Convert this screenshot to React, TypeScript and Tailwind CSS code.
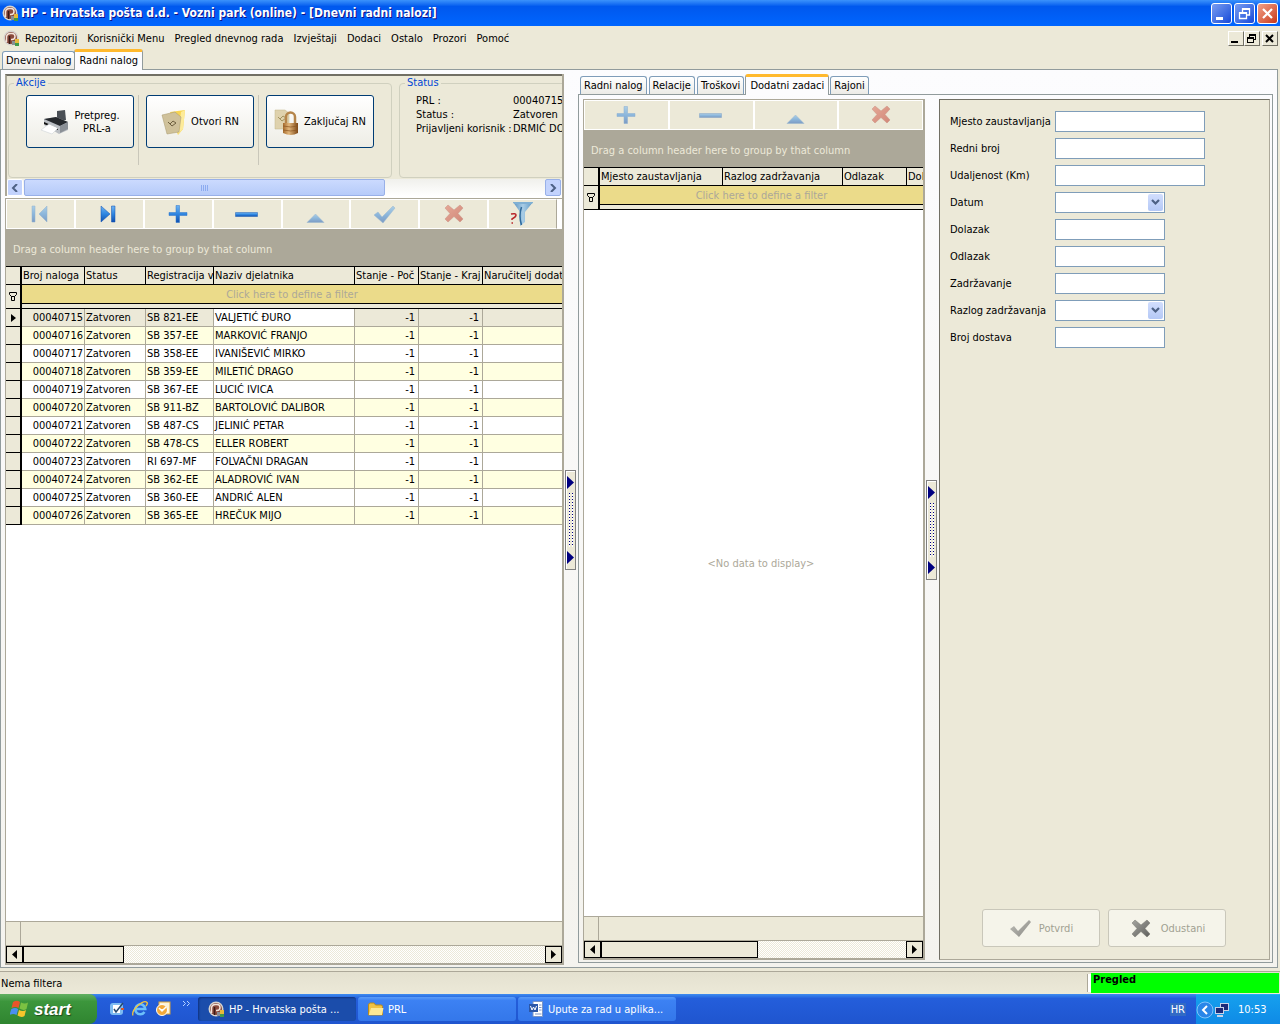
import { useState } from 'react';
import type { ReactNode } from 'react';

const menuItems = ['Repozitorij', 'Korisnički Menu', 'Pregled dnevnog rada', 'Izvještaji', 'Dodaci', 'Ostalo', 'Prozori', 'Pomoć'];

const orders = [
  { id: '00040715', reg: 'SB 821-EE', name: 'VALJETIĆ ĐURO' },
  { id: '00040716', reg: 'SB 357-EE', name: 'MARKOVIĆ FRANJO' },
  { id: '00040717', reg: 'SB 358-EE', name: 'IVANIŠEVIĆ MIRKO' },
  { id: '00040718', reg: 'SB 359-EE', name: 'MILETIĆ DRAGO' },
  { id: '00040719', reg: 'SB 367-EE', name: 'LUCIĆ IVICA' },
  { id: '00040720', reg: 'SB 911-BZ', name: 'BARTOLOVIĆ DALIBOR' },
  { id: '00040721', reg: 'SB 487-CS', name: 'JELINIĆ PETAR' },
  { id: '00040722', reg: 'SB 478-CS', name: 'ELLER ROBERT' },
  { id: '00040723', reg: 'RI 697-MF', name: 'FOLVAČNI DRAGAN' },
  { id: '00040724', reg: 'SB 362-EE', name: 'ALADROVIĆ IVAN' },
  { id: '00040725', reg: 'SB 360-EE', name: 'ANDRIĆ ALEN' },
  { id: '00040726', reg: 'SB 365-EE', name: 'HREČUK MIJO' },
];

const fields = [
  { id: 'mjesto', label: 'Mjesto zaustavljanja', wide: true },
  { id: 'redni', label: 'Redni broj', wide: true },
  { id: 'udaljenost', label: 'Udaljenost (Km)', wide: true },
  { id: 'datum', label: 'Datum', select: true },
  { id: 'dolazak', label: 'Dolazak' },
  { id: 'odlazak', label: 'Odlazak' },
  { id: 'zadrzavanje', label: 'Zadržavanje' },
  { id: 'razlog', label: 'Razlog zadržavanja', select: true },
  { id: 'dostava', label: 'Broj dostava' },
];

const AppIcon = () => (
  <svg width="17" height="17" viewBox="0 0 17 17" className="shrink-0">
    <circle cx="8" cy="8" r="7.500" fill="#d6d3cf" />
    <circle cx="8" cy="8" r="6" fill="#8a4a3c" />
    <path d="M3.500 12V7a4 4 0 0 1 4-3.500h1.500a3 3 0 0 1 0 6H8" fill="none" stroke="#f4e4da" strokeWidth="1.500" />
    <path d="M6.500 6v8" stroke="#3a1a16" strokeWidth="1.500" />
    <rect x="9" y="11" width="4" height="4" fill="#8a8f94" />
    <rect x="12" y="9" width="4" height="4" fill="#e7b93a" />
    <rect x="12" y="13" width="4" height="3" fill="#3f9a4a" />
  </svg>
);

// shared gradients for the toolbar glyphs
const Defs = () => (
  <svg width="0" height="0" className="absolute" aria-hidden="true">
    <defs>
      <linearGradient id="blue" x1="0" y1="0" x2="0" y2="1">
        <stop offset="0" stopColor="#6fb4f2" />
        <stop offset="0.5" stopColor="#2f86e0" />
        <stop offset="1" stopColor="#0f4fb0" />
      </linearGradient>
      <linearGradient id="red" x1="0" y1="0" x2="1" y2="1">
        <stop offset="0" stopColor="#e06a58" />
        <stop offset="1" stopColor="#b8281c" />
      </linearGradient>
      <linearGradient id="gray" x1="0" y1="0" x2="1" y2="1">
        <stop offset="0" stopColor="#a5a5a0" />
        <stop offset="1" stopColor="#5f5f5c" />
      </linearGradient>
      <linearGradient id="bronze" x1="0" y1="0" x2="1" y2="0">
        <stop offset="0" stopColor="#a56a2c" />
        <stop offset="0.4" stopColor="#e2b77c" />
        <stop offset="1" stopColor="#7d4715" />
      </linearGradient>
      <linearGradient id="funnel" x1="0" y1="0" x2="1" y2="0">
        <stop offset="0" stopColor="#5c93c0" />
        <stop offset="0.5" stopColor="#a9cde6" />
        <stop offset="1" stopColor="#5b95c2" />
      </linearGradient>
    </defs>
  </svg>
);

const crossPath = 'M6 4l6 5 6-5 3 3-5 5.500 5 5.500-3 3-6-5.500-6 5.500-3-3 5-5.500-5-5.500z';

const glyphs: Record<string, ReactNode> = {
  first: <path d="M4 5h3v16H4zM19 5v16l-8-8z" fill="url(#blue)" stroke="#3a7cc8" strokeWidth=".5" />,
  last: <path d="M4 5v16l9-8zM14.500 5h3.500v16h-3.500z" fill="url(#blue)" stroke="#0f4fb0" strokeWidth=".5" />,
  add: <path d="M10 4.500h3.500v7H21v3h-7.500v7H10v-7H3v-3h7z" fill="url(#blue)" stroke="#2a74cc" strokeWidth=".5" />,
  remove: <path d="M.500 11.500h22v4H.500z" fill="url(#blue)" stroke="#1c5fb4" strokeWidth=".5" />,
  up: <path d="M11.500 13l8.500 8.500H3z" fill="url(#blue)" stroke="#4a88c8" strokeWidth=".5" />,
  ok: <path d="M1 14l4-3 4 5L20 5l2 2L10 22z" fill="url(#blue)" stroke="#4a88c8" strokeWidth=".5" />,
  cancel: <path d={crossPath} fill="url(#red)" stroke="#a83a30" strokeWidth=".5" />,
};

const ToolButton = ({ name, label, disabled }: { name: string; label: string; disabled?: boolean }) => (
  <button
    aria-label={label}
    disabled={disabled}
    className="flex h-full flex-1 items-center justify-center border border-white bg-[#ece9d8]"
  >
    <svg width="24" height="26" viewBox="0 0 24 26" className={disabled ? 'opacity-50' : ''}>
      {glyphs[name]}
    </svg>
  </button>
);

const FilterGlyph = () => (
  <svg width="8" height="9" viewBox="0 0 8 9" className="mx-auto">
    <path d="M.500 .500h7v2l-2 2h-3l-2-2zM2.500 4.500h3v4h-3z" stroke="#000" fill="none" />
  </svg>
);

const ScrollArrow = ({ left }: { left?: boolean }) => (
  <button aria-label={left ? 'Lijevo' : 'Desno'} className="flex w-[17px] shrink-0 items-center justify-center border border-black bg-[#ece9d8]">
    <svg width="5" height="9" viewBox="0 0 5 9">
      <path d={left ? 'M5 0v9L0 4.500z' : 'M0 0v9l5-4.500z'} />
    </svg>
  </button>
);

const GridFooter = ({ thumb }: { thumb: string }) => (
  <>
    <div className="flex h-[25px] border-y border-[#aca899] bg-[#ece9d8]">
      <div className="w-[15px] border-r border-[#aca899]" />
    </div>
    <div className="flex h-[17px] bg-[repeating-conic-gradient(#ffffff_0_25%,#ece9d8_0_50%)] bg-[length:2px_2px]">
      <ScrollArrow left />
      <div className={`border border-black bg-[#ece9d8] ${thumb}`} />
      <div className="flex-1" />
      <ScrollArrow />
    </div>
  </>
);

const GroupBand = () => (
  <div className="flex h-[37px] items-center overflow-hidden bg-[#aca899] px-[7px] pt-[3px] whitespace-nowrap text-[#ece9d8]">
    Drag a column header here to group by that column
  </div>
);

const th = 'h-[19px] overflow-hidden border-y border-r border-black bg-[#ece9d8] pl-px text-left font-normal whitespace-nowrap';

const FilterRows = ({ span }: { span: number }) => (
  <>
    <tr>
      <td rowSpan={2} className="border-r-2 border-b border-black bg-[#ece9d8]"><FilterGlyph /></td>
      <td colSpan={span} className="h-[19px] border-b border-black bg-[#ebdb8a] text-center text-[#aca899]">
        Click here to define a filter
      </td>
    </tr>
    <tr>
      <td colSpan={span} className="h-[5px] border-b border-black bg-[#ece9d8]" />
    </tr>
  </>
);

const OrdersTable = () => {
  const [selected, setSelected] = useState('00040715');
  const cell = 'h-[18px] overflow-hidden border-r border-b border-[#aca899] px-px whitespace-nowrap';

  return (
    <table className="w-full table-fixed border-separate border-spacing-0">
      <colgroup>
        <col className="w-[16px]" />
        <col className="w-[63px]" />
        <col className="w-[61px]" />
        <col className="w-[68px]" />
        <col className="w-[141px]" />
        <col className="w-[64px]" />
        <col className="w-[64px]" />
        <col />
      </colgroup>
      <thead>
        <tr>
          <th className={`${th} border-r-2`} />
          <th className={th}>Broj naloga</th>
          <th className={th}>Status</th>
          <th className={th}>Registracija v</th>
          <th className={th}>Naziv djelatnika</th>
          <th className={th}>Stanje - Poč</th>
          <th className={th}>Stanje - Kraj</th>
          <th className={`${th} border-r-0`}>Naručitelj dodatn</th>
        </tr>
      </thead>
      <tbody>
        <FilterRows span={7} />
        {orders.map((o, i) => {
          const active = o.id === selected;
          const bg = active ? 'bg-[#ece9d8]' : i % 2 ? 'bg-[#ffffe1]' : 'bg-white';
          return (
            <tr key={o.id} onClick={() => setSelected(o.id)} className={bg}>
              <td className="border-r-2 border-b border-black bg-[#ece9d8]">
                {active && (
                  <svg width="5" height="8" viewBox="0 0 5 8" className="mx-auto"><path d="M0 0v8l5-4z" /></svg>
                )}
              </td>
              <td className={`${cell} text-right`}>{o.id}</td>
              <td className={cell}>Zatvoren</td>
              <td className={cell}>{o.reg}</td>
              <td className={`${cell} ${active ? 'bg-white' : ''}`}>{o.name}</td>
              <td className={`${cell} pr-[3px] text-right`}>-1</td>
              <td className={`${cell} pr-[3px] text-right`}>-1</td>
              <td className={`${cell} border-r-0`} />
            </tr>
          );
        })}
      </tbody>
    </table>
  );
};

const Splitter = () => (
  <div className="flex w-[14px] shrink-0 items-center pl-px">
    <div className="flex h-[100px] w-[11px] flex-col items-center justify-between border border-[#808080] bg-[#ece9d8] py-[5px] shadow-[inset_1px_1px_#ffffff]">
      <svg width="7" height="13" viewBox="0 0 7 13"><path d="M0 0v13l7-6.500z" fill="#000080" /></svg>
      <svg width="6" height="54" viewBox="0 0 6 54" shapeRendering="crispEdges">
        <path d="M1.500 0v54M4.500 0v54" stroke="#fff" />
        <path d="M1.500 0v54M4.500 0v54" stroke="#000080" strokeDasharray="1 2" />
      </svg>
      <svg width="7" height="13" viewBox="0 0 7 13"><path d="M0 0v13l7-6.500z" fill="#000080" /></svg>
    </div>
  </div>
);

const Tab = ({ children, active }: { children: ReactNode; active?: boolean }) => (
  <button
    role="tab"
    aria-selected={!!active}
    className={
      active
        ? 'z-10 -mx-px -mb-px h-[21px] rounded-t-[3px] border-x border-t-3 border-x-[#919b9c] border-t-[#ffb92e] bg-[#fcfcfe] px-[4px] pb-[2px] whitespace-nowrap'
        : 'h-[18px] rounded-t-[3px] border border-b-0 border-[#7f9db9] bg-linear-to-b from-white to-[#ecebe6] px-[3px] whitespace-nowrap'
    }
  >
    {children}
  </button>
);

const PrinterIcon = () => (
  <svg width="30" height="28" viewBox="0 0 30 28" className="shrink-0">
    <path d="M17 3l8-1 1 10-9 1z" fill="#4a4f55" />
    <path d="M4 11l12-2 12 5v8l-9 4-15-9z" fill="#b9bdc2" />
    <path d="M4 11l12-2 12 5-8 4z" fill="#26292d" />
    <path d="M20 18l8-4v7l-8 4z" fill="#8b9096" />
    <path d="M4 14l14 6v2L4 16z" fill="#111" />
    <path d="M1 22l8-6 9 4-6 6z" fill="#fff" stroke="#cfd3d6" strokeWidth=".6" />
  </svg>
);

const FolderIcon = () => (
  <svg width="26" height="28" viewBox="0 0 26 28" className="shrink-0">
    <path d="M9 4l15-2-2 19-5 6z" fill="#f7d552" />
    <path d="M20 4l4-2-2 19-5 5z" fill="#fdeb9a" />
    <path d="M1 7l13-3 6 5-2 15-12 2z" fill="#cfc19a" stroke="#a7966a" strokeWidth=".5" />
    <path d="M7 14l4 4 4-3-3-2-3 3" fill="none" stroke="#6e6040" />
  </svg>
);

const LockIcon = () => (
  <svg width="26" height="28" viewBox="0 0 26 28" className="shrink-0">
    <path d="M1 2h10l4 3v16H1z" fill="#dfd2ad" stroke="#c2b48a" strokeWidth=".5" />
    <path d="M4 9l4 4 4-3-3-2-3 3" fill="none" stroke="#a3935f" />
    <path d="M12 16V9a4.500 4.500 0 0 1 9 0v7" fill="none" stroke="#b5854a" strokeWidth="2.500" />
    <path d="M9 15h15v10q-7 4-15 0z" fill="url(#bronze)" />
    <path d="M9 18q8 2 15 0M9 22q8 2 15 0" fill="none" stroke="#8a5420" strokeWidth=".7" />
  </svg>
);

const ActionButton = ({ icon, children }: { icon: ReactNode; children: ReactNode }) => (
  <button className="flex h-[53px] w-[108px] shrink-0 items-center justify-center gap-[4px] rounded-[3px] border border-[#003c74] bg-linear-to-b from-white to-[#eeede5] text-center">
    {icon}
    <span className="whitespace-nowrap">{children}</span>
  </button>
);

const ActionsBox = () => (
  <div className="border-t-2 border-l-2 border-t-[#716f64] border-l-[#aca899] bg-[#ece9d8]">
    <div className="flex h-[103px] gap-[7px] overflow-hidden pt-px pl-px">
      <fieldset className="h-[101px] w-[384px] shrink-0 rounded-[4px] border border-[#d0d0bf] pl-[17px]">
        <legend className="-ml-[12px] px-[2px] leading-[12px] text-[#0046d5]">Akcije</legend>
        <div className="flex gap-[4px] pt-[6px]">
          <ActionButton icon={<PrinterIcon />}>Pretpreg.<br />PRL-a</ActionButton>
          <div className="mr-[3px] h-[70px] w-px bg-[#c9c7ba]" />
          <ActionButton icon={<FolderIcon />}>Otvori RN</ActionButton>
          <div className="mr-[3px] h-[70px] w-px bg-[#c9c7ba]" />
          <ActionButton icon={<LockIcon />}>Zaključaj RN</ActionButton>
        </div>
      </fieldset>
      <fieldset className="h-[101px] w-[240px] shrink-0 rounded-[4px] border border-[#d0d0bf] pl-[16px]">
        <legend className="-ml-[11px] px-[2px] leading-[12px] text-[#0046d5]">Status</legend>
        <dl className="grid grid-cols-[97px_1fr] pt-[5px] leading-[14px] whitespace-nowrap">
          <dt>PRL :</dt>
          <dd>00040715</dd>
          <dt>Status :</dt>
          <dd>Zatvoren</dd>
          <dt>Prijavljeni korisnik :</dt>
          <dd>DRMIĆ DO</dd>
        </dl>
      </fieldset>
    </div>
    <div className="flex h-[17px] bg-linear-to-b from-[#f0f0ec] to-white">
      <button aria-label="Lijevo" className="flex w-[16px] items-center justify-center rounded-[2px] border border-white bg-[#c3d3fd]">
        <svg width="8" height="8" viewBox="0 0 8 8"><path d="M6 0L2 4l4 4" fill="none" stroke="#4d6185" strokeWidth="2" /></svg>
      </button>
      <div className="ml-px flex w-[361px] items-center justify-center gap-px rounded-[2px] border border-[#98b0e8] bg-linear-to-b from-[#cbdafe] to-[#b6cbf9]">
        <span className="h-[6px] w-px bg-[#8cabf0]" />
        <span className="h-[6px] w-px bg-[#8cabf0]" />
        <span className="h-[6px] w-px bg-[#8cabf0]" />
        <span className="h-[6px] w-px bg-[#8cabf0]" />
      </div>
      <div className="flex-1" />
      <button aria-label="Desno" className="mr-px flex w-[16px] items-center justify-center rounded-[2px] border border-[#98b0e8] bg-[#c3d3fd]">
        <svg width="8" height="8" viewBox="0 0 8 8"><path d="M2 0l4 4-4 4" fill="none" stroke="#4d6185" strokeWidth="2" /></svg>
      </button>
    </div>
  </div>
);

const LeftPane = () => (
  <section className="flex w-[559px] shrink-0 flex-col border-r-2 border-[#aca899] bg-white">
    <ActionsBox />
    <div className="mt-[2px] flex h-[31px] border-t border-l border-[#aca899] pr-[5px]">
      <ToolButton name="first" label="Prvi" disabled />
      <ToolButton name="last" label="Zadnji" />
      <ToolButton name="add" label="Dodaj" />
      <ToolButton name="remove" label="Obriši" />
      <ToolButton name="up" label="Uredi" disabled />
      <ToolButton name="ok" label="Potvrdi" disabled />
      <ToolButton name="cancel" label="Odustani" disabled />
      <button aria-label="Filter" className="flex h-full flex-1 items-center justify-center border border-white border-r-[#aca899] bg-[#ece9d8]">
        <svg width="28" height="26" viewBox="0 0 28 26">
          <path d="M4 1h20l-8 10v10l-5 4V11z" fill="url(#funnel)" />
          <path d="M4 1h20l-1 2H5z" fill="#7fb0d4" />
          <path d="M12.500 6q-3 9 0 18" fill="none" stroke="#2f6a9c" strokeWidth="1.500" />
          <path d="M2 13q5-1 5 1t-4 4v1M2.500 22h1.500" fill="none" stroke="#b8262a" strokeWidth="1.500" />
        </svg>
      </button>
    </div>
    <div className="flex flex-1 flex-col border-b-2 border-l border-[#aca899]">
      <GroupBand />
      <OrdersTable />
      <div className="flex-1" />
      <GridFooter thumb="w-[101px]" />
    </div>
  </section>
);

const StopsPane = () => (
  <section className="flex w-[342px] shrink-0 flex-col border-r-2 border-b-2 border-l border-[#aca899] bg-white">
    <div className="flex h-[31px] border-t border-[#aca899]">
      <ToolButton name="add" label="Dodaj" disabled />
      <ToolButton name="remove" label="Obriši" disabled />
      <ToolButton name="up" label="Uredi" disabled />
      <ToolButton name="cancel" label="Odustani" disabled />
    </div>
    <GroupBand />
    <table className="w-full table-fixed border-separate border-spacing-0">
      <colgroup>
        <col className="w-[16px]" />
        <col className="w-[123px]" />
        <col className="w-[120px]" />
        <col className="w-[64px]" />
        <col />
      </colgroup>
      <thead>
        <tr>
          <th className={`${th} border-r-2`} />
          <th className={th}>Mjesto zaustavljanja</th>
          <th className={th}>Razlog zadržavanja</th>
          <th className={th}>Odlazak</th>
          <th className={`${th} border-r-0`}>Dol</th>
        </tr>
      </thead>
      <tbody>
        <FilterRows span={4} />
      </tbody>
    </table>
    <div className="flex flex-1 items-center justify-center pl-[15px] text-[#aca899]">&lt;No data to display&gt;</div>
    <GridFooter thumb="w-[157px]" />
  </section>
);

const inputStyle = 'h-[21px] border border-[#7f9db9] bg-white px-[3px] outline-none';

const DetailsForm = () => (
  <form
    onSubmit={(e) => e.preventDefault()}
    className="flex flex-1 flex-col border border-t-[#716f64] border-r-[#aca899] border-b-[#aca899] border-l-[#716f64] bg-[#ece9d8] pt-[11px] pl-[10px]"
  >
    <div className="flex flex-col gap-[6px]">
      {fields.map((f) => (
        <div key={f.id} className="flex items-center">
          <label htmlFor={f.id} className="w-[105px] whitespace-nowrap">{f.label}</label>
          {f.select ? (
            <div className="relative flex">
              <select id={f.id} className={`${inputStyle} w-[110px] appearance-none`}>
                <option value=""></option>
              </select>
              <span className="pointer-events-none absolute top-[2px] right-[2px] flex h-[17px] w-[15px] items-center justify-center rounded-[2px] bg-linear-to-b from-[#d2defd] to-[#b4c8f6]">
                <svg width="9" height="7" viewBox="0 0 9 7"><path d="M1 1l3.500 3.500L8 1" fill="none" stroke="#4d6185" strokeWidth="2.200" /></svg>
              </span>
            </div>
          ) : (
            <input id={f.id} type="text" className={`${inputStyle} ${f.wide ? 'w-[150px]' : 'w-[110px]'}`} />
          )}
        </div>
      ))}
    </div>
    <div className="mt-auto mr-[43px] mb-[12px] flex justify-end gap-[8px]">
      <button disabled className="flex h-[38px] w-[118px] items-center justify-center gap-[6px] rounded-[3px] border border-[#c9c7ba] bg-[#f5f4ea] text-[#a1a192]">
        <svg width="24" height="26" viewBox="0 0 24 26"><path d="M1 14l4-3 4 5L20 5l2 2L10 22z" fill="url(#gray)" opacity=".7" /></svg>
        Potvrdi
      </button>
      <button disabled className="flex h-[38px] w-[118px] items-center justify-center gap-[8px] rounded-[3px] border border-[#c9c7ba] bg-[#f5f4ea] text-[#a1a192]">
        <svg width="24" height="24" viewBox="0 0 24 24"><path d={crossPath} fill="url(#gray)" stroke="#77776f" strokeWidth=".5" /></svg>
        Odustani
      </button>
    </div>
  </form>
);

const TitleBar = () => (
  <header className="flex h-[26px] items-center bg-linear-to-b from-[#3b92fb] via-[#0058ee] via-25% to-[#0066ff] pr-[2px] pl-[2px]">
    <AppIcon />
    <h1 className="ml-[2px] flex-1 text-[12px] font-bold whitespace-nowrap text-white [text-shadow:1px_1px_#0f1089]">
      HP - Hrvatska pošta d.d. - Vozni park (online) - [Dnevni radni nalozi]
    </h1>
    <div className="flex gap-[2px]">
      <button aria-label="Minimize" className="size-[21px] rounded-[3px] border border-white bg-linear-to-br from-[#7a9cf0] to-[#1746d8]">
        <svg width="19" height="19" viewBox="0 0 19 19"><path d="M4 13h7v3H4z" fill="#fff" /></svg>
      </button>
      <button aria-label="Restore" className="size-[21px] rounded-[3px] border border-white bg-linear-to-br from-[#7a9cf0] to-[#1746d8]">
        <svg width="19" height="19" viewBox="0 0 19 19"><path d="M7.500 8V5h7v6h-3M4.500 9h7v5.500h-7z" fill="none" stroke="#fff" strokeWidth="1.300" /><path d="M7 4h8v2H7zM4 8h8v2H4z" fill="#fff" /></svg>
      </button>
      <button aria-label="Close" className="size-[21px] rounded-[3px] border border-white bg-linear-to-br from-[#f0a088] to-[#c83410]">
        <svg width="19" height="19" viewBox="0 0 19 19"><path d="M5 5l9 9M14 5l-9 9" stroke="#fff" strokeWidth="2.200" /></svg>
      </button>
    </div>
  </header>
);

const mdiButton = 'h-[15px] w-[16px] border border-t-white border-r-[#716f64] border-b-[#716f64] border-l-white bg-[#ece9d8]';

const MenuBar = () => (
  <nav className="flex h-[23px] items-center pt-px pr-[2px] pl-[3px]">
    <AppIcon />
    <div className="ml-[5px] flex flex-1 gap-[10px]">
      {menuItems.map((item) => (
        <button key={item} className="whitespace-nowrap">{item}</button>
      ))}
    </div>
    <div className="flex">
      <button aria-label="Minimize child" className={mdiButton}>
        <svg width="14" height="13" viewBox="0 0 14 13"><path d="M2 9h7v2H2z" /></svg>
      </button>
      <button aria-label="Restore child" className={mdiButton}>
        <svg width="14" height="13" viewBox="0 0 14 13" shapeRendering="crispEdges"><path d="M4 2h7v6H9V7h1V4H5v1H4zM2 5h7v6H2zM3 7v3h5V7z" fillRule="evenodd" /></svg>
      </button>
      <button aria-label="Close child" className={`${mdiButton} ml-[2px]`}>
        <svg width="14" height="13" viewBox="0 0 14 13"><path d="M3 3l7 7M10 3l-7 7" stroke="#000" strokeWidth="2" /></svg>
      </button>
    </div>
  </nav>
);

const StatusBar = () => (
  <footer className="mt-[3px] flex h-[23px] border-t border-[#aca899] bg-linear-to-b from-[#e4e1d0] to-[#ece9d8]">
    <div className="flex flex-1 items-center px-px">Nema filtera</div>
    <div className="my-[2px] w-[4px] border-l border-[#aca899] bg-white" />
    <div className="mt-px mr-px h-[20px] w-[188px] bg-[#00ff00] px-[2px] font-bold">Pregled</div>
  </footer>
);

const taskButton = 'flex h-[24px] w-[158px] items-center gap-[4px] overflow-hidden rounded-[3px] px-[10px] whitespace-nowrap text-white';

const TaskBar = () => (
  <div className="flex h-[30px] items-center bg-linear-to-b from-[#3f8cf0] via-[#245edb] via-15% to-[#1f55cf]">
    <button className="flex h-full w-[97px] items-center gap-[4px] rounded-r-[8px] bg-linear-to-b from-[#62b062] via-[#3c963c] via-25% to-[#2f8530] pl-[10px]">
      <svg width="20" height="20" viewBox="0 0 20 20">
        <path d="M3 3q4-2.500 7 0L8.500 9q-3-2-7 0z" fill="#e8542a" />
        <path d="M11 3.500q4 2 7 0L16.500 10q-3 2-7-.500z" fill="#7cc142" />
        <path d="M1.200 10.200q4-2.200 7 0L6.500 16q-3-2-7 0z" fill="#4a8ff0" />
        <path d="M9 11q4 2 7 0l-1.500 6q-3 2-7-.500z" fill="#f7c52c" />
      </svg>
      <span className="font-['Liberation_Sans',sans-serif] text-[17px] font-bold text-white italic [text-shadow:1px_1px_1px_#1c4a1c]">start</span>
    </button>
    <div className="ml-[12px] flex w-[89px] items-center gap-[7px]">
      <button aria-label="Desktop">
        <svg width="16" height="16" viewBox="0 0 16 16">
          <rect x="1" y="2" width="13" height="12" rx="3" fill="#7dbcf2" />
          <rect x="4" y="4" width="7" height="8" fill="#fff" />
          <path d="M5 8l2 3 7-9" fill="none" stroke="#27496e" strokeWidth="1.500" />
          <path d="M12 8h3" stroke="#d8562c" strokeWidth="2" />
        </svg>
      </button>
      <button aria-label="Internet Explorer">
        <svg width="16" height="16" viewBox="0 0 16 16">
          <path d="M12.500 11a5 5 0 1 1 .8-3H4" fill="none" stroke="#6cc0fa" strokeWidth="2.500" />
          <path d="M1 14.500Q-.500 10 6 4.500t9-3q1 1-1 3.500" fill="none" stroke="#f5c63a" strokeWidth="1.300" />
        </svg>
      </button>
      <button aria-label="Outlook">
        <svg width="16" height="16" viewBox="0 0 16 16">
          <rect x="4" y="1" width="11" height="12" fill="#fdf3d8" stroke="#d8a23a" />
          <circle cx="7" cy="9" r="5.500" fill="#f3a93a" stroke="#fff" />
          <path d="M4 7l3 3 4-4M7 10V8" fill="none" stroke="#fff" strokeWidth="1.500" />
        </svg>
      </button>
      <svg width="16" height="6" viewBox="0 0 16 6" className="mb-[10px]"><path d="M5 0l2.500 2.500L5 5M9 0l2.500 2.500L9 5" fill="none" stroke="#b8d4ff" /></svg>
    </div>
    <div className="flex flex-1 gap-[2px]">
      <button className={`${taskButton} bg-[#1b4dab] shadow-[inset_1px_1px_2px_#0f3280]`}>
        <AppIcon />
        HP - Hrvatska pošta ...
      </button>
      <button className={`${taskButton} bg-linear-to-b from-[#5a9cf8] via-[#3c81f3] via-15% to-[#3477ea]`}>
        <svg width="16" height="14" viewBox="0 0 16 14">
          <path d="M.500 3q0-2 2-2H6l1.500 2H13q1.500 0 1.500 1.500V13H.500z" fill="#f0c244" stroke="#b98a1c" />
          <path d="M.800 13L3 6h12.500L14 13z" fill="#fde894" />
        </svg>
        PRL
      </button>
      <button className={`${taskButton} bg-linear-to-b from-[#5a9cf8] via-[#3c81f3] via-15% to-[#3477ea]`}>
        <svg width="16" height="16" viewBox="0 0 16 16" className="shrink-0">
          <path d="M5 .500h9.500v15H5z" fill="#fff" stroke="#7a94c4" />
          <path d="M11 4h2.500M11 6.500h2.500M11 9h2.500M7 13h6.500" stroke="#7a94c4" />
          <path d="M1 3h9v8H1z" fill="#2b57a8" />
          <path d="M2.500 5L4 9l1.500-3L7 9l1.500-4" fill="none" stroke="#fff" />
        </svg>
        Upute za rad u aplika...
      </button>
    </div>
    <span className="mr-[10px] bg-[#316ac5] px-px text-white">HR</span>
    <div className="flex h-full w-[84px] items-center border-t border-[#1fb0f5] bg-linear-to-b from-[#16a0ee] to-[#0f8ae6] text-white">
      <button aria-label="Prikaži ikone">
        <svg width="18" height="18" viewBox="0 0 18 18">
          <circle cx="9" cy="9" r="8" fill="#2a86e8" stroke="#7fc4fb" />
          <path d="M11 5L7 9l4 4" fill="none" stroke="#fff" strokeWidth="2" />
        </svg>
      </button>
      <svg width="16" height="16" viewBox="0 0 16 16">
        <rect x="6.500" y="1.500" width="8" height="7" fill="#1b2a78" stroke="#c6d2e8" />
        <rect x="1.500" y="5.500" width="8" height="6" fill="#1b2a78" stroke="#c6d2e8" />
        <path d="M3 13h6v2H3z" fill="#c6d2e8" />
      </svg>
      <span className="ml-[8px]">10:53</span>
    </div>
  </div>
);

export default function App() {
  return (
    <div className="flex min-h-screen flex-col bg-[#ece9d8] font-['DejaVu_Sans_Condensed','DejaVu_Sans',sans-serif] text-[11px] leading-[13px] text-black">
      <Defs />
      <TitleBar />
      <MenuBar />
      <div role="tablist" className="flex h-[20px] items-end pl-[2px]">
        <Tab>Dnevni nalog</Tab>
        <Tab active>Radni nalog</Tab>
      </div>
      <main className="mr-[2px] flex flex-1 border border-[#919b9c] bg-linear-to-b from-[#fcfcfe] to-[#f4f3ee] pt-[4px] pr-[4px] pb-[2px] pl-[4px]">
        <LeftPane />
        <Splitter />
        <div className="flex min-w-0 flex-1 flex-col pb-[2px]">
          <div role="tablist" className="flex h-[20px] items-end gap-[2px] pl-[2px]">
            <Tab>Radni nalog</Tab>
            <Tab>Relacije</Tab>
            <Tab>Troškovi</Tab>
            <Tab active>Dodatni zadaci</Tab>
            <Tab>Rajoni</Tab>
          </div>
          <div className="flex flex-1 border border-[#919b9c] pt-[4px] pr-[2px] pb-[2px] pl-[4px]">
            <StopsPane />
            <Splitter />
            <DetailsForm />
          </div>
        </div>
      </main>
      <StatusBar />
      <TaskBar />
    </div>
  );
}
